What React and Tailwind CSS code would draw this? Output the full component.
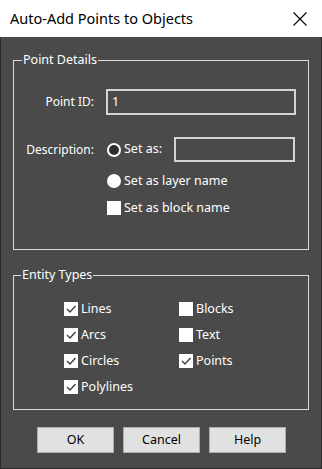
import React from "react";

const font = { fontFamily: '"Noto Sans", "Open Sans", sans-serif' };

function Check({ checked }) {
  return (
    <span className="w-[14px] h-[14px] bg-white flex items-center justify-center shrink-0">
      {checked && (
        <svg width="12" height="12" viewBox="0 0 12 12">
          <path d="M2 6 L5 9 L10.5 3" fill="none" stroke="#3a3a3a" strokeWidth="1.3" />
        </svg>
      )}
    </span>
  );
}

function Radio({ filled }) {
  return filled ? (
    <span className="w-[14px] h-[14px] rounded-full bg-white shrink-0" />
  ) : (
    <span className="w-[14px] h-[14px] rounded-full border-2 border-white bg-[#2e2e2e] shrink-0" />
  );
}

function Item({ checked, label }) {
  return (
    <div className="flex items-center gap-[3px] h-[26px]">
      <Check checked={checked} />
      <span>{label}</span>
    </div>
  );
}

export default function App() {
  return (
    <div
      className="w-[322px] h-[469px] flex flex-col bg-[#4a4a4a] text-white text-[12.5px] leading-none border-x border-b border-[#2b2b2b]"
      style={font}
    >
      <div className="h-[37px] shrink-0 bg-white flex items-center justify-between pl-[10px] pr-[15px] -mx-px">
        <span className="text-[14.5px] text-black">Auto-Add Points to Objects</span>
        <svg width="14" height="14" viewBox="0 0 14 14">
          <path d="M0.5 0.5 L13.5 13.5 M13.5 0.5 L0.5 13.5" stroke="#000" strokeWidth="1.1" />
        </svg>
      </div>

      <div className="flex flex-col px-[12px] pt-[15px]">
        <fieldset className="border border-[#dcdcdc] h-[198px] pl-[1px]">
          <legend className="ml-[7px] px-[1px] leading-[16px]">Point Details</legend>
          <div className="grid grid-cols-[79px_1fr] gap-x-[12px] items-center mt-[21px]">
            <span className="text-right text-[12px]">Point ID:</span>
            <div className="h-[26px] w-[190px] border-2 border-[#d4d4d4] flex items-center pl-[4px]">1</div>
          </div>
          <div className="grid grid-cols-[79px_1fr] gap-x-[12px] items-center mt-[22px]">
            <span className="text-right text-[12px]">Description:</span>
            <div className="flex items-center">
              <div className="flex items-center gap-[3px] pl-[1px]">
                <Radio />
                <span>Set as:</span>
              </div>
              <div className="ml-[12px] h-[25px] w-[121px] border-2 border-[#d4d4d4]" />
            </div>
          </div>
          <div className="flex flex-col pl-[92px] mt-[8px]">
            <div className="flex items-center gap-[3px] h-[22px]">
              <Radio filled />
              <span>Set as layer name</span>
            </div>
            <div className="flex items-center gap-[3px] h-[22px] mt-[5px]">
              <Check />
              <span>Set as block name</span>
            </div>
          </div>
        </fieldset>

        <fieldset className="border border-[#dcdcdc] h-[143px] mt-[17px]">
          <legend className="ml-[7px] px-[1px] leading-[16px]">Entity Types</legend>
          <div className="grid grid-cols-[115px_1fr] pl-[50px] mt-[13px]">
            <div className="flex flex-col">
              <Item checked label="Lines" />
              <Item checked label="Arcs" />
              <Item checked label="Circles" />
              <Item checked label="Polylines" />
            </div>
            <div className="flex flex-col">
              <Item label="Blocks" />
              <Item label="Text" />
              <Item checked label="Points" />
            </div>
          </div>
        </fieldset>

        <div className="flex gap-[9px] pl-[24px] mt-[17px]">
          {["OK", "Cancel", "Help"].map((t) => (
            <button
              key={t}
              className="w-[77px] h-[26px] bg-[#e1e1e1] border border-[#adadad] text-black text-[12.5px] flex items-center justify-center"
            >
              {t}
            </button>
          ))}
        </div>
      </div>
    </div>
  );
}
